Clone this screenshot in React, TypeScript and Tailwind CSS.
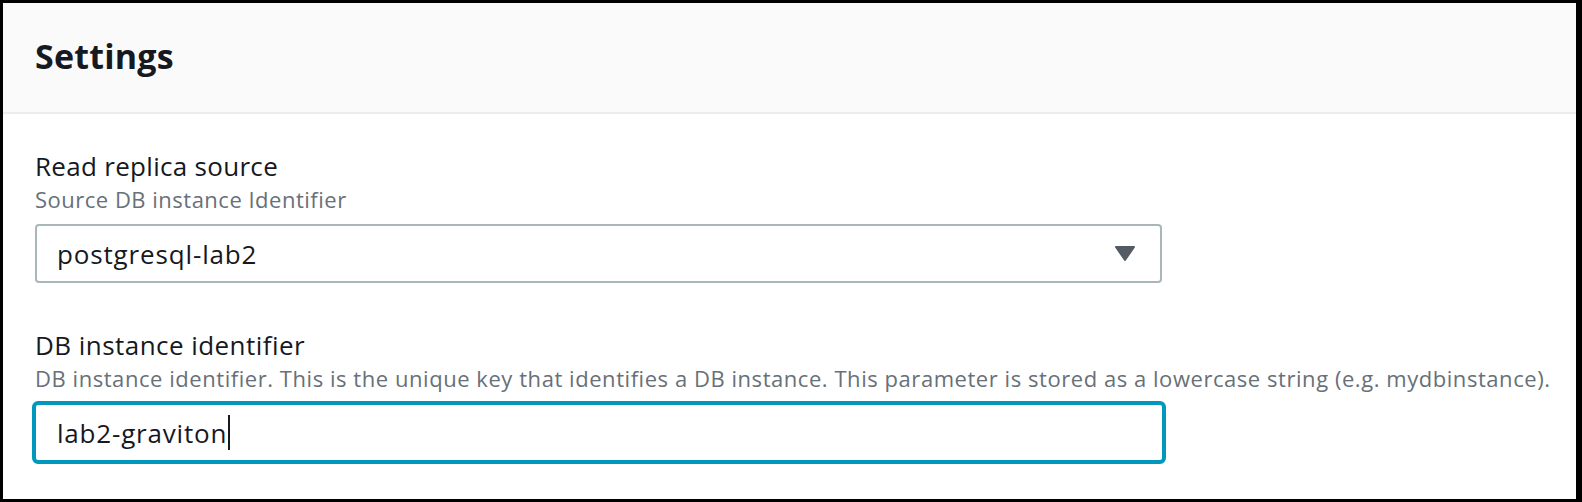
export default function App() {
  return (
    <div className="w-[1582px] h-[502px] bg-white border-black border-t-[3px] border-l-[3px] border-b-[3px] border-r-[6px] font-['Open_Sans',sans-serif] text-[#16191f]">
      {/* Header */}
      <div className="h-[111px] bg-[#fafafa] border-b-2 border-[#eaeded] flex items-center pl-[32px] pb-[4px]">
        <h2 className="text-[34px] font-bold leading-none tracking-[0.2px]">Settings</h2>
      </div>

      {/* Body */}
      <div className="pl-[32px] pt-[36px]">
        {/* Read replica source */}
        <div>
          <div className="text-[26px] leading-[32px] tracking-[0.3px]">Read replica source</div>
          <div className="mt-[3px] text-[22px] leading-[28px] tracking-[0.5px] text-[#687078]">Source DB instance Identifier</div>
          <div className="mt-[11px] w-[1127px] h-[59px] border-2 border-[#aab7b8] rounded-[4px] flex items-center justify-between pl-[20px] pr-[24px]">
            <span className="text-[26px] leading-[32px] tracking-[0.85px]">postgresql-lab2</span>
            <svg width="22" height="17" viewBox="0 0 22 17" className="block">
              <polygon points="2,2 20,2 11,15" fill="#545b64" stroke="#545b64" strokeWidth="2" strokeLinejoin="round" />
            </svg>
          </div>
        </div>

        {/* DB instance identifier */}
        <div className="mt-[46px]">
          <div className="text-[26px] leading-[32px] tracking-[0.45px]">DB instance identifier</div>
          <div className="mt-[3px] text-[22px] leading-[28px] tracking-[0.55px] text-[#687078]">
            DB instance identifier. This is the unique key that identifies a DB instance. This parameter is stored as a lowercase string (e.g. mydbinstance).
          </div>
          <div className="mt-[9px] -ml-[3px] w-[1134px] h-[63px] border-4 border-[#0099bd] rounded-[6px] flex items-center pl-[21px]">
            <span className="text-[26px] leading-[32px] tracking-[0.8px]">lab2-graviton</span>
            <span className="ml-[1px] w-[2px] h-[35px] bg-[#16191f]" />
          </div>
        </div>
      </div>
    </div>
  )
}
